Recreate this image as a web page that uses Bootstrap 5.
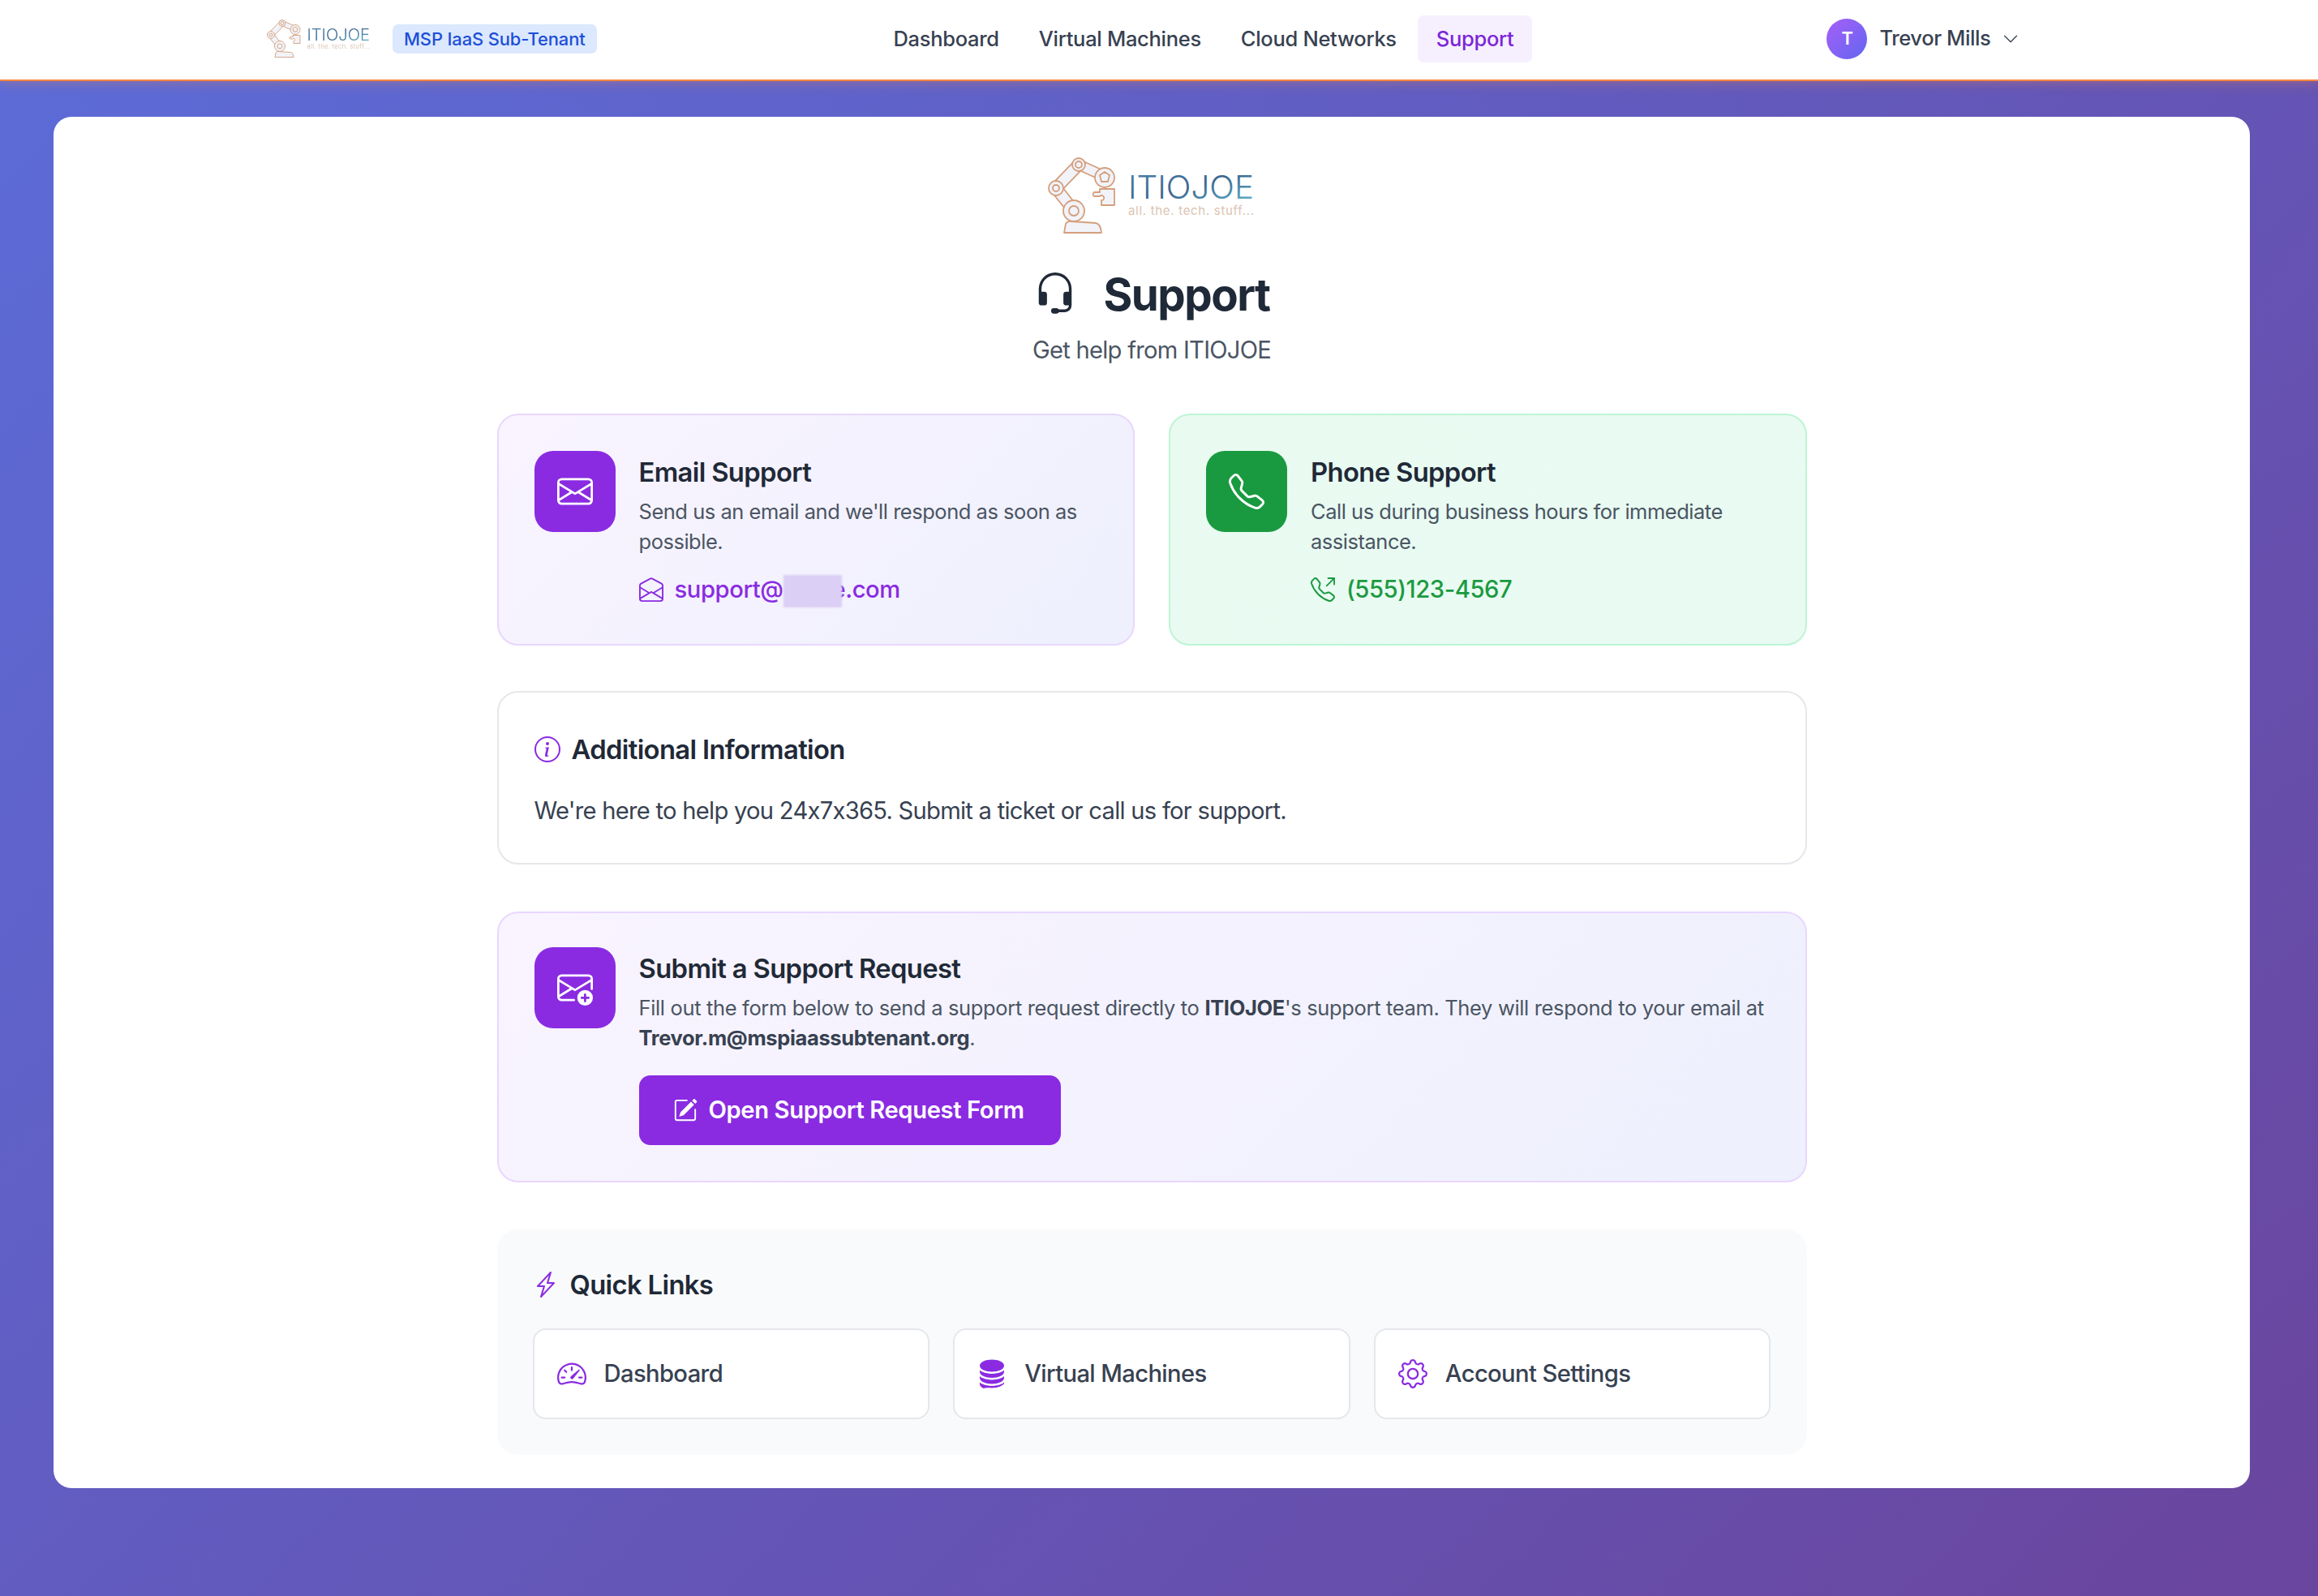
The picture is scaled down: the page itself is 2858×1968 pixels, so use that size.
<!DOCTYPE html>
<html lang="en">
<head>
    <meta charset="UTF-8">
    <meta name="viewport" content="width=device-width, initial-scale=1.0">
    <title>Support</title>
    <link href="https://cdn.jsdelivr.net/npm/bootstrap@5.3.0/dist/css/bootstrap.min.css" rel="stylesheet">
    <style>
        html, body {
            min-height: 1968px;
        }
        body {
            font-family: "Inter", "Liberation Sans", sans-serif;
            font-feature-settings: "calt" 0;
            background: linear-gradient(135deg, #5c6cd8 0%, #6a459e 100%);
            color: #1f2937;
        }
        svg {
            display: block;
            flex-shrink: 0;
        }

        /* top bar */
        .top-bar {
            height: 100px;
            padding: 0 0 3px 328px;
            background: #fff;
            border-bottom: 2px solid #f5853f;
            box-shadow: 0 2px 14px rgba(245, 133, 63, .35);
            justify-content: flex-start;
        }
        .brand-logo {
            width: 130px;
            height: 50px;
            filter: blur(.5px);
        }
        .tenant-badge {
            margin-left: 26px;
            padding: 0 14px;
            height: 36px;
            line-height: 36px;
            font-size: 21.9px;
            font-weight: 500;
            letter-spacing: -.12px;
            color: #1d4ed8;
            background: #dbe8fe;
            border-radius: 7px;
        }
        .main-links {
            margin-left: 343px;
            gap: 3px;
        }
        .main-links .nav-link {
            height: 58px;
            line-height: 58px;
            padding: 0 23px;
            font-size: 25.5px;
            font-weight: 500;
            letter-spacing: -.3px;
            color: #374151;
            border-radius: 7px;
        }
        .main-links .nav-link.active {
            color: #7c26d8;
            background: #f6f0fe;
        }
        .user-menu {
            margin-left: 363px;
            gap: 15px;
            font-size: 25.5px;
            font-weight: 500;
            letter-spacing: -.38px;
            color: #374151;
        }
        .user-avatar {
            width: 50px;
            height: 50px;
            font-size: 21.9px;
            font-weight: 600;
            color: #fff;
            background: linear-gradient(135deg, #a65ff7, #6366f1);
        }

        /* page */
        .page-sheet {
            margin: 44px 84px 0 66px;
            padding: 48px 0 41px;
            background: #fff;
            border-radius: 22px;
        }
        .page-inner {
            width: 1615px;
            margin: 0 auto;
        }
        .page-logo {
            width: 258px;
            height: 100px;
            margin: 0 auto;
        }
        .page-title {
            margin: 38px 0 0;
            gap: 32px;
            font-size: 54.7px;
            line-height: 66px;
            font-weight: 700;
            letter-spacing: -1.5px;
            color: #1f2937;
        }
        .page-sub {
            margin: 14px 0 56px;
            font-size: 29.2px;
            line-height: 44px;
            letter-spacing: -.75px;
            color: #4b5563;
        }
        .contact-row {
            --bs-gutter-x: 42px;
            margin-bottom: 56px;
        }
        .panel {
            border-width: 2px;
            border-radius: 26px;
            color: #1f2937;
        }
        .panel-body {
            padding: 44px;
            gap: 29px;
        }
        .panel-violet {
            background: linear-gradient(135deg, #f9f4ff, #eef0fd);
            border-color: #e9d7fe;
        }
        .panel-green {
            background: linear-gradient(135deg, #e9fbf1, #e8faf2);
            border-color: #bdf5d3;
        }
        .panel-plain {
            border-color: #e5e7eb;
            margin-bottom: 58px;
        }
        .panel-plain .panel-body {
            padding: 44px 44px 42px;
            display: block;
        }
        .panel-request {
            margin-bottom: 58px;
        }
        .panel-request .panel-body {
            padding: 42px 44px 44px;
        }
        .panel-request .panel-text {
            letter-spacing: -.35px;
        }
        .icon-tile {
            width: 100px;
            height: 100px;
            color: #fff;
            border-radius: 23px;
        }
        .tile-violet {
            background: #8a2be2;
        }
        .tile-green {
            background: #1a9a40;
        }
        .panel-title {
            margin: 0;
            font-size: 32.8px;
            line-height: 52px;
            font-weight: 600;
            letter-spacing: -.66px;
        }
        .title-row {
            gap: 14px;
        }
        .panel-text {
            margin: 5px 0 0;
            font-size: 25.5px;
            line-height: 36.5px;
            letter-spacing: -.48px;
            color: #4b5563;
        }
        .panel-text b {
            font-weight: 700;
            color: #374151;
        }
        .contact-link {
            margin-top: 18px;
            height: 46px;
            gap: 14px;
            font-size: 29.2px;
            font-weight: 500;
            letter-spacing: -.42px;
            text-decoration: none;
        }
        .link-violet {
            color: #8a2be2;
        }
        .link-green {
            color: #1a9a40;
        }
        .mail-mask {
            display: inline-block;
            position: relative;
            z-index: 1;
            width: 72px;
            height: 40px;
            margin: 0 -12px 0 0;
            vertical-align: middle;
            background: #dccff5;
            filter: blur(1px);
        }
        .title-icon {
            color: #8a2be2;
        }
        .info-text {
            margin: 28px 0 0;
            font-size: 29.2px;
            line-height: 44px;
            letter-spacing: -.75px;
            color: #374151;
        }
        .request-btn {
            margin-top: 28px;
            height: 86px;
            padding: 0 45px 0 42px;
            gap: 14px;
            font-size: 29.2px;
            font-weight: 600;
            letter-spacing: -.4px;
            color: #fff;
            background: #8a2be2;
            border: 0;
            border-radius: 14px;
        }
        .request-btn:hover {
            color: #fff;
            background: #7a22cc;
        }
        .quick-panel {
            padding: 42px 44px 44px;
            background: #f9fafb;
            border-radius: 26px;
        }
        .quick-row {
            --bs-gutter-x: 29px;
            margin-top: 28px;
        }
        .quick-link {
            height: 112px;
            padding: 0 28px;
            gap: 22px;
            font-size: 29.2px;
            font-weight: 500;
            letter-spacing: -.62px;
            color: #374151;
            text-decoration: none;
            background: #fff;
            border: 2px solid #e5e7eb;
            border-radius: 16px;
        }
        .db-icon {
            margin: 0 -2px;
        }
    </style>
</head>
<body>
    <!-- Top bar -->
    <nav class="navbar top-bar">
        <a href="#" class="d-block">
            <svg class="brand-logo" viewBox="0 0 258 100"><use href="#itioLogo"/></svg>
        </a>
        <span class="badge tenant-badge">MSP IaaS Sub-Tenant</span>
        <ul class="nav main-links">
            <li class="nav-item"><a class="nav-link" href="#">Dashboard</a></li>
            <li class="nav-item"><a class="nav-link" href="#">Virtual Machines</a></li>
            <li class="nav-item"><a class="nav-link" href="#">Cloud Networks</a></li>
            <li class="nav-item"><a class="nav-link active" href="#">Support</a></li>
        </ul>
        <div class="d-flex align-items-center user-menu">
            <span class="user-avatar rounded-circle d-flex align-items-center justify-content-center">T</span>
            <span>Trevor Mills</span>
            <svg width="20" height="20" viewBox="0 0 16 16" fill="currentColor"><path fill-rule="evenodd" d="M1.646 4.646a.5.5 0 0 1 .708 0L8 10.293l5.646-5.647a.5.5 0 0 1 .708.708l-6 6a.5.5 0 0 1-.708 0l-6-6a.5.5 0 0 1 0-.708z"/></svg>
        </div>
    </nav>

    <main class="page-sheet">
        <div class="page-inner">
            <!-- Logo and heading -->
            <svg class="page-logo" viewBox="0 0 258 100">
                <defs>
                    <linearGradient id="logoInk" x1="0" y1="0" x2="1" y2="1">
                        <stop offset="0" stop-color="#4a86ad"/>
                        <stop offset=".5" stop-color="#3a6590"/>
                        <stop offset="1" stop-color="#63bdd2"/>
                    </linearGradient>
                </defs>
                <g id="itioLogo">
                    <g fill="#f2f3f9" stroke="#d49f7c" stroke-width="1.8" stroke-linejoin="round">
                        <path d="M21 95 L23 84 Q25 80 30 81 L60 83 Q66 84 67 95 Z"/>
                        <polygon points="38.5,63.7 16.5,35.7 5.5,44.3 27.5,72.3"/>
                        <polygon points="16,44.9 44,15.9 34,6.1 6,35.1"/>
                        <polygon points="36.5,16.5 69.5,31.5 74.5,20.5 41.5,5.5"/>
                        <circle cx="33" cy="68" r="13"/>
                        <circle cx="33" cy="68" r="6"/>
                        <circle cx="11" cy="40" r="9"/>
                        <circle cx="11" cy="40" r="4"/>
                        <circle cx="39" cy="11" r="8"/>
                        <circle cx="39" cy="11" r="4"/>
                        <circle cx="71" cy="27" r="12"/>
                        <polygon points="71,20 77,24 75,32 67,32 65,24"/>
                        <path d="M65 41h18v20H67v-6a3 3 0 1 0-2-5h-7a3 3 0 0 1 0-5h7z"/>
                    </g>
                    <text x="100" y="53" font-family="Inter, sans-serif" font-size="39" font-weight="300" textLength="155" lengthAdjust="spacingAndGlyphs" fill="url(#logoInk)">ITIOJOE</text>
                    <text x="100" y="73" font-family="Inter, sans-serif" font-size="15" textLength="155" fill="#dcc3b2">all. the. tech. stuff...</text>
                </g>
            </svg>
            <h1 class="page-title d-flex align-items-center justify-content-center">
                <svg width="54" height="54" viewBox="0 0 16 16" fill="currentColor"><path d="M8 1a5 5 0 0 0-5 5v1h1a1 1 0 0 1 1 1v3a1 1 0 0 1-1 1H3a1 1 0 0 1-1-1V6a6 6 0 1 1 12 0v6a2.5 2.5 0 0 1-2.5 2.5H9.366a1 1 0 0 1-.866.5h-1a1 1 0 1 1 0-2h1a1 1 0 0 1 .866.5H11.5A1.5 1.5 0 0 0 13 12h-1a1 1 0 0 1-1-1V8a1 1 0 0 1 1-1h1V6a5 5 0 0 0-5-5z"/></svg>
                Support
            </h1>
            <p class="page-sub text-center">Get help from ITIOJOE</p>

            <!-- Email and phone -->
            <div class="row contact-row">
                <div class="col-6">
                    <div class="card h-100 panel panel-violet">
                        <div class="card-body d-flex panel-body">
                            <div class="icon-tile tile-violet d-flex align-items-center justify-content-center flex-shrink-0">
                                <svg width="44" height="44" viewBox="0 0 16 16" fill="currentColor"><path d="M0 4a2 2 0 0 1 2-2h12a2 2 0 0 1 2 2v8a2 2 0 0 1-2 2H2a2 2 0 0 1-2-2V4Zm2-1a1 1 0 0 0-1 1v.217l7 4.2 7-4.2V4a1 1 0 0 0-1-1H2Zm13 2.383-4.708 2.825L15 11.105V5.383Zm-.034 6.876-5.64-3.471L8 9.583l-1.326-.795-5.64 3.47A1 1 0 0 0 2 13h12a1 1 0 0 0 .966-.741ZM1 11.105l4.708-2.897L1 5.383v5.722Z"/></svg>
                            </div>
                            <div>
                                <h3 class="panel-title">Email Support</h3>
                                <p class="panel-text">Send us an email and we'll respond as soon as possible.</p>
                                <a href="#" class="contact-link link-violet d-flex align-items-center">
                                    <svg width="30" height="30" viewBox="0 0 16 16" fill="currentColor"><path d="M8.47 1.318a1 1 0 0 0-.94 0l-6 3.2A1 1 0 0 0 1 5.4v.817l5.75 3.45L8 8.917l1.25.75L15 6.217V5.4a1 1 0 0 0-.53-.882l-6-3.2ZM15 7.383l-4.778 2.867L15 13.117V7.383Zm-.035 6.88L8 10.082l-6.965 4.18A1 1 0 0 0 2 15h12a1 1 0 0 0 .965-.738ZM1 13.116l4.778-2.867L1 7.383v5.734ZM7.059.435a2 2 0 0 1 1.882 0l6 3.2A2 2 0 0 1 16 5.4V14a2 2 0 0 1-2 2H2a2 2 0 0 1-2-2V5.4a2 2 0 0 1 1.059-1.765l6-3.2Z"/></svg>
                                    <span>support@<span class="mail-mask"></span>e.com</span>
                                </a>
                            </div>
                        </div>
                    </div>
                </div>
                <div class="col-6">
                    <div class="card h-100 panel panel-green">
                        <div class="card-body d-flex panel-body">
                            <div class="icon-tile tile-green d-flex align-items-center justify-content-center flex-shrink-0">
                                <svg width="44" height="44" viewBox="0 0 16 16" fill="currentColor"><path d="M3.654 1.328a.678.678 0 0 0-1.015-.063L1.605 2.3c-.483.484-.661 1.169-.45 1.77a17.568 17.568 0 0 0 4.168 6.608 17.569 17.569 0 0 0 6.608 4.168c.601.211 1.286.033 1.77-.45l1.034-1.034a.678.678 0 0 0-.063-1.015l-2.307-1.794a.678.678 0 0 0-.58-.122l-2.19.547a1.745 1.745 0 0 1-1.657-.459L5.482 8.062a1.745 1.745 0 0 1-.46-1.657l.548-2.19a.678.678 0 0 0-.122-.58L3.654 1.328zM1.884.511a1.745 1.745 0 0 1 2.612.163L6.29 2.98c.329.423.445.974.315 1.494l-.547 2.19a.678.678 0 0 0 .178.643l2.457 2.457a.678.678 0 0 0 .644.178l2.189-.547a1.745 1.745 0 0 1 1.494.315l2.306 1.794c.829.645.905 1.87.163 2.611l-1.034 1.034c-.74.74-1.846 1.065-2.877.702a18.634 18.634 0 0 1-7.01-4.42 18.634 18.634 0 0 1-4.42-7.009c-.362-1.03-.037-2.137.703-2.877L1.885.511z"/></svg>
                            </div>
                            <div>
                                <h3 class="panel-title">Phone Support</h3>
                                <p class="panel-text">Call us during business hours for immediate assistance.</p>
                                <a href="#" class="contact-link link-green d-flex align-items-center">
                                    <svg width="30" height="30" viewBox="0 0 16 16" fill="currentColor"><path d="M3.654 1.328a.678.678 0 0 0-1.015-.063L1.605 2.3c-.483.484-.661 1.169-.45 1.77a17.568 17.568 0 0 0 4.168 6.608 17.569 17.569 0 0 0 6.608 4.168c.601.211 1.286.033 1.77-.45l1.034-1.034a.678.678 0 0 0-.063-1.015l-2.307-1.794a.678.678 0 0 0-.58-.122l-2.19.547a1.745 1.745 0 0 1-1.657-.459L5.482 8.062a1.745 1.745 0 0 1-.46-1.657l.548-2.19a.678.678 0 0 0-.122-.58L3.654 1.328zM1.884.511a1.745 1.745 0 0 1 2.612.163L6.29 2.98c.329.423.445.974.315 1.494l-.547 2.19a.678.678 0 0 0 .178.643l2.457 2.457a.678.678 0 0 0 .644.178l2.189-.547a1.745 1.745 0 0 1 1.494.315l2.306 1.794c.829.645.905 1.87.163 2.611l-1.034 1.034c-.74.74-1.846 1.065-2.877.702a18.634 18.634 0 0 1-7.01-4.42 18.634 18.634 0 0 1-4.42-7.009c-.362-1.03-.037-2.137.703-2.877L1.885.511zM11 .5a.5.5 0 0 1 .5-.5h4a.5.5 0 0 1 .5.5v4a.5.5 0 0 1-1 0V1.707l-4.146 4.147a.5.5 0 0 1-.708-.708L14.293 1H11.5a.5.5 0 0 1-.5-.5z"/></svg>
                                    <span>(555)123-4567</span>
                                </a>
                            </div>
                        </div>
                    </div>
                </div>
            </div>

            <!-- Additional information -->
            <div class="card panel panel-plain">
                <div class="card-body panel-body">
                    <div class="d-flex align-items-center title-row">
                        <svg class="title-icon" width="32" height="32" viewBox="0 0 16 16" fill="currentColor"><path d="M8 15A7 7 0 1 1 8 1a7 7 0 0 1 0 14zm0 1A8 8 0 1 0 8 0a8 8 0 0 0 0 16z"/><path d="m8.93 6.588-2.29.287-.082.38.45.083c.294.07.352.176.288.469l-.738 3.468c-.194.897.105 1.319.808 1.319.545 0 1.178-.252 1.465-.598l.088-.416c-.2.176-.492.246-.686.246-.275 0-.375-.193-.304-.533L8.93 6.588zM9 4.5a1 1 0 1 1-2 0 1 1 0 0 1 2 0z"/></svg>
                        <h3 class="panel-title">Additional Information</h3>
                    </div>
                    <p class="info-text">We're here to help you 24x7x365. Submit a ticket or call us for support.</p>
                </div>
            </div>

            <!-- Support request -->
            <div class="card panel panel-violet panel-request">
                <div class="card-body d-flex panel-body">
                    <div class="icon-tile tile-violet d-flex align-items-center justify-content-center flex-shrink-0">
                        <svg width="44" height="44" viewBox="0 0 16 16" fill="currentColor"><path d="M2 2a2 2 0 0 0-2 2v8.01A2 2 0 0 0 2 14h5.5a.5.5 0 0 0 0-1H2a1 1 0 0 1-.966-.741l5.64-3.471L8 9.583l7-4.2V8.5a.5.5 0 0 0 1 0V4a2 2 0 0 0-2-2H2Zm3.708 6.208L1 11.105V5.383l4.708 2.825ZM1 4.217V4a1 1 0 0 1 1-1h12a1 1 0 0 1 1 1v.217l-7 4.2-7-4.2Z"/><path d="M16 12.5a3.5 3.5 0 1 1-7 0 3.5 3.5 0 0 1 7 0Zm-3.5-2a.5.5 0 0 0-.5.5v1h-1a.5.5 0 0 0 0 1h1v1a.5.5 0 0 0 1 0v-1h1a.5.5 0 0 0 0-1h-1v-1a.5.5 0 0 0-.5-.5Z"/></svg>
                    </div>
                    <div>
                        <h3 class="panel-title">Submit a Support Request</h3>
                        <p class="panel-text">Fill out the form below to send a support request directly to <b>ITIOJOE</b>'s support team. They will respond to your email at <b>Trevor.m@mspiaassubtenant.org</b>.</p>
                        <a href="#" class="btn request-btn d-inline-flex align-items-center">
                            <svg width="30" height="30" viewBox="0 0 16 16" fill="currentColor"><path d="M15.502 1.94a.5.5 0 0 1 0 .706L14.459 3.69l-2-2L13.502.646a.5.5 0 0 1 .707 0l1.293 1.293zm-1.75 2.456-2-2L4.939 9.21a.5.5 0 0 0-.121.196l-.805 2.414a.25.25 0 0 0 .316.316l2.414-.805a.5.5 0 0 0 .196-.12l6.813-6.814z"/><path fill-rule="evenodd" d="M1 13.5A1.5 1.5 0 0 0 2.5 15h11a1.5 1.5 0 0 0 1.5-1.5v-6a.5.5 0 0 0-1 0v6a.5.5 0 0 1-.5.5h-11a.5.5 0 0 1-.5-.5v-11a.5.5 0 0 1 .5-.5H9a.5.5 0 0 0 0-1H2.5A1.5 1.5 0 0 0 1 2.5v11z"/></svg>
                            Open Support Request Form
                        </a>
                    </div>
                </div>
            </div>

            <!-- Quick links -->
            <div class="quick-panel">
                <div class="d-flex align-items-center title-row">
                    <svg class="title-icon" width="32" height="32" viewBox="0 0 16 16" fill="currentColor"><path d="M11.251.068a.5.5 0 0 1 .227.58L9.677 6.5H13a.5.5 0 0 1 .364.843l-8 8.5a.5.5 0 0 1-.842-.49L6.323 9.5H3a.5.5 0 0 1-.364-.843l8-8.5a.5.5 0 0 1 .615-.09zM4.157 8.5H7a.5.5 0 0 1 .478.647L6.11 13.59l5.732-6.09H9a.5.5 0 0 1-.478-.647L9.89 2.41 4.157 8.5z"/></svg>
                    <h3 class="panel-title">Quick Links</h3>
                </div>
                <div class="row quick-row">
                    <div class="col-4">
                        <a href="#" class="quick-link d-flex align-items-center">
                            <svg class="title-icon" width="36" height="36" viewBox="0 0 16 16" fill="currentColor"><path d="M8 4a.5.5 0 0 1 .5.5V6a.5.5 0 0 1-1 0V4.5A.5.5 0 0 1 8 4zM3.732 5.732a.5.5 0 0 1 .707 0l.915.914a.5.5 0 1 1-.708.708l-.914-.915a.5.5 0 0 1 0-.707zM2 10a.5.5 0 0 1 .5-.5h1.586a.5.5 0 0 1 0 1H2.5A.5.5 0 0 1 2 10zm9.5 0a.5.5 0 0 1 .5-.5h1.5a.5.5 0 0 1 0 1H12a.5.5 0 0 1-.5-.5zm.754-4.246a.389.389 0 0 0-.527-.02L7.547 9.31a.91.91 0 1 0 1.302 1.258l3.434-4.297a.389.389 0 0 0-.029-.518z"/><path fill-rule="evenodd" d="M0 10a8 8 0 1 1 15.547 2.661c-.442 1.253-1.845 1.602-2.932 1.25C11.309 13.488 9.475 13 8 13c-1.474 0-3.31.488-4.615.911-1.087.352-2.49.003-2.932-1.25A7.988 7.988 0 0 1 0 10zm8-7a7 7 0 0 0-6.603 9.329c.203.575.923.876 1.68.63C4.397 12.533 6.358 12 8 12s3.604.532 4.923.96c.757.245 1.477-.056 1.68-.631A7 7 0 0 0 8 3z"/></svg>
                            Dashboard
                        </a>
                    </div>
                    <div class="col-4">
                        <a href="#" class="quick-link d-flex align-items-center">
                            <svg class="title-icon db-icon" width="40" height="40" viewBox="0 0 16 16" fill="currentColor"><path d="M3.904 1.777C4.978 1.289 6.427 1 8 1s3.022.289 4.096.777C13.125 2.245 14 2.993 14 4s-.875 1.755-1.904 2.223C11.022 6.711 9.573 7 8 7s-3.022-.289-4.096-.777C2.875 5.755 2 5.007 2 4s.875-1.755 1.904-2.223Z"/><path d="M2 6.161V7c0 1.007.875 1.755 1.904 2.223C4.978 9.71 6.427 10 8 10s3.022-.289 4.096-.777C13.125 8.755 14 8.007 14 7v-.839c-.457.432-1.004.751-1.49.972C11.278 7.693 9.682 8 8 8s-3.278-.307-4.51-.867c-.486-.22-1.033-.54-1.49-.972Z"/><path d="M2 9.161V10c0 1.007.875 1.755 1.904 2.223C4.978 12.711 6.427 13 8 13s3.022-.289 4.096-.777C13.125 11.755 14 11.007 14 10v-.839c-.457.432-1.004.751-1.49.972-1.232.56-2.828.867-4.51.867s-3.278-.307-4.51-.867c-.486-.22-1.033-.54-1.49-.972Z"/><path d="M2 12.161V13c0 1.007.875 1.755 1.904 2.223C4.978 14.711 6.427 15 8 15s3.022-.289 4.096-.777C13.125 13.755 14 13.007 14 13v-.839c-.457.432-1.004.751-1.49.972-1.232.56-2.828.867-4.51.867s-3.278-.307-4.51-.867c-.486-.22-1.033-.54-1.49-.972Z"/></svg>
                            Virtual Machines
                        </a>
                    </div>
                    <div class="col-4">
                        <a href="#" class="quick-link d-flex align-items-center">
                            <svg class="title-icon" width="36" height="36" viewBox="0 0 16 16" fill="currentColor"><path d="M8 4.754a3.246 3.246 0 1 0 0 6.492 3.246 3.246 0 0 0 0-6.492zM5.754 8a2.246 2.246 0 1 1 4.492 0 2.246 2.246 0 0 1-4.492 0z"/><path d="M9.796 1.343c-.527-1.79-3.065-1.79-3.592 0l-.094.319a.873.873 0 0 1-1.255.52l-.292-.16c-1.64-.892-3.433.902-2.54 2.541l.159.292a.873.873 0 0 1-.52 1.255l-.319.094c-1.79.527-1.79 3.065 0 3.592l.319.094a.873.873 0 0 1 .52 1.255l-.16.292c-.892 1.64.901 3.434 2.541 2.54l.292-.159a.873.873 0 0 1 1.255.52l.094.319c.527 1.79 3.065 1.79 3.592 0l.094-.319a.873.873 0 0 1 1.255-.52l.292.16c1.64.893 3.434-.902 2.54-2.541l-.159-.292a.873.873 0 0 1 .52-1.255l.319-.094c1.79-.527 1.79-3.065 0-3.592l-.319-.094a.873.873 0 0 1-.52-1.255l.16-.292c.893-1.64-.902-3.433-2.541-2.54l-.292.159a.873.873 0 0 1-1.255-.52l-.094-.319zm-2.633.283c.246-.835 1.428-.835 1.674 0l.094.319a1.873 1.873 0 0 0 2.693 1.115l.291-.16c.764-.415 1.6.42 1.184 1.185l-.159.292a1.873 1.873 0 0 0 1.116 2.692l.318.094c.835.246.835 1.428 0 1.674l-.319.094a1.873 1.873 0 0 0-1.115 2.693l.16.291c.415.764-.42 1.6-1.185 1.184l-.291-.159a1.873 1.873 0 0 0-2.693 1.116l-.094.318c-.246.835-1.428.835-1.674 0l-.094-.319a1.873 1.873 0 0 0-2.692-1.115l-.292.16c-.764.415-1.6-.42-1.184-1.185l.159-.291A1.873 1.873 0 0 0 1.945 8.93l-.319-.094c-.835-.246-.835-1.428 0-1.674l.319-.094A1.873 1.873 0 0 0 3.06 4.377l-.16-.292c-.415-.764.42-1.6 1.185-1.184l.292.159a1.873 1.873 0 0 0 2.692-1.115l.094-.319z"/></svg>
                            Account Settings
                        </a>
                    </div>
                </div>
            </div>
        </div>
    </main>

    <script src="https://cdn.jsdelivr.net/npm/bootstrap@5.3.0/dist/js/bootstrap.bundle.min.js"></script>
</body>
</html>
